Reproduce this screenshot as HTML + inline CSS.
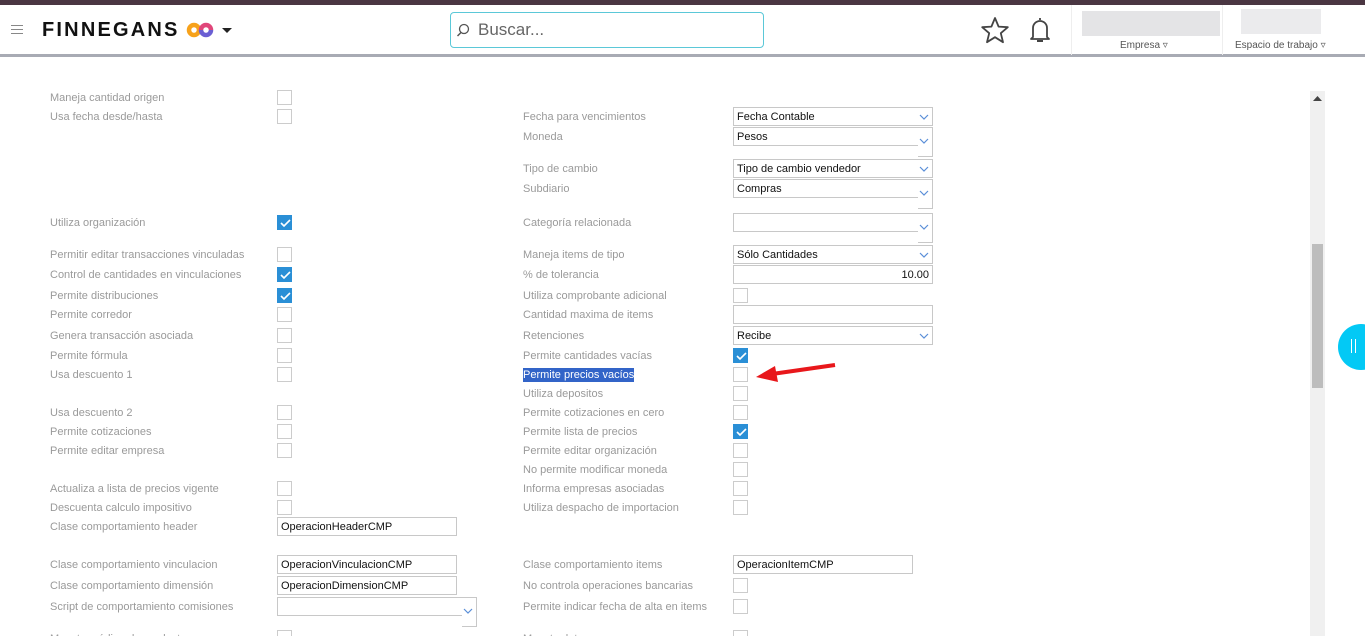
<!DOCTYPE html>
<html><head><meta charset="utf-8"><style>
*{margin:0;padding:0;box-sizing:border-box}
html,body{width:1365px;height:636px;overflow:hidden}
body{background:#fff;font-family:"Liberation Sans",sans-serif;position:relative}
.a{position:absolute}
.l{position:absolute;font-size:11px;color:#9a9a9a;line-height:14px;white-space:nowrap;margin-top:1px}
.cb{position:absolute;width:15px;height:15px;border:1px solid #ccc;background:#fff}
.cb.on{background:#2a8fd6;border-color:#2a8fd6}
.cb.on svg{position:absolute;left:1px;top:1px}
.in{position:absolute;width:200px;height:19px;border:1px solid #c8c8c8;font-size:11px;color:#111;line-height:19px;padding-left:3px;background:#fff}
.chev{position:absolute;right:3px;top:6px;width:10px;height:6px}
.ln{position:absolute;background:#c8c8c8}
</style></head><body>
<div class="a" style="left:0;top:0;width:1365px;height:5px;background:#4a3642"></div>
<div class="a" style="left:0;top:54px;width:1365px;height:3px;background:#a8abb4"></div>
<div class="a" style="left:11px;top:25px;width:12px;height:1px;background:#888;box-shadow:0 4px 0 #888,0 8px 0 #888"></div>
<div class="a" style="left:42px;top:18px;font-size:20px;font-weight:bold;letter-spacing:2.2px;color:#111;line-height:24px">FINNEGANS</div>
<svg class="a" style="left:186px;top:22px" width="30" height="16"><circle cx="8" cy="8" r="5" fill="none" stroke="#f7a21b" stroke-width="4.5"/><path d="M15 8a5 5 0 0 1 10 0" fill="none" stroke="#e0467a" stroke-width="4.5"/><path d="M15 8a5 5 0 0 0 10 0" fill="none" stroke="#6b5fd3" stroke-width="4.5"/></svg>
<svg class="a" style="left:222px;top:28px" width="10" height="6"><path d="M0 0h10L5 5z" fill="#222"/></svg>
<div class="a" style="left:450px;top:12px;width:314px;height:36px;border:1px solid #5bc8d8;border-radius:4px"></div>
<svg class="a" style="left:456px;top:23px" width="14" height="14"><circle cx="8" cy="6" r="4.5" fill="none" stroke="#555" stroke-width="1.3"/><path d="M5 9.5L1.5 13" stroke="#555" stroke-width="1.5"/></svg>
<div class="a" style="left:478px;top:20px;font-size:17px;color:#666">Buscar...</div>
<svg class="a" style="left:980px;top:16px" width="30" height="29"><path d="M15 2l3.6 8.6 9.2.6-7 6 2.2 9-8-5-8 5 2.2-9-7-6 9.2-.6z" fill="none" stroke="#444" stroke-width="1.8" stroke-linejoin="round"/></svg>
<svg class="a" style="left:1027px;top:15px" width="26" height="31"><path d="M13 3v2M6 22V13a7 7 0 0 1 14 0v9l2 2H4z" fill="none" stroke="#444" stroke-width="1.8" stroke-linejoin="round"/><path d="M10 26h6" stroke="#444" stroke-width="2"/></svg>
<div class="a" style="left:1071px;top:5px;width:1px;height:50px;background:#eee"></div>
<div class="a" style="left:1222px;top:5px;width:1px;height:50px;background:#eee"></div>
<div class="a" style="left:1082px;top:11px;width:138px;height:25px;background:#e4e4e6"></div>
<div class="a" style="left:1241px;top:9px;width:80px;height:25px;background:#ebebed"></div>
<div class="a" style="left:1120px;top:40px;font-size:10px;color:#555">Empresa ▿</div>
<div class="a" style="left:1235px;top:40px;font-size:10px;color:#555">Espacio de trabajo ▿</div>

<div class="l" style="left:50px;top:90px">Maneja cantidad origen</div>
<div class="l" style="left:50px;top:109px">Usa fecha desde/hasta</div>
<div class="l" style="left:50px;top:215px">Utiliza organización</div>
<div class="l" style="left:50px;top:247px">Permitir editar transacciones vinculadas</div>
<div class="l" style="left:50px;top:267px">Control de cantidades en vinculaciones</div>
<div class="l" style="left:50px;top:288px">Permite distribuciones</div>
<div class="l" style="left:50px;top:307px">Permite corredor</div>
<div class="l" style="left:50px;top:328px">Genera transacción asociada</div>
<div class="l" style="left:50px;top:348px">Permite fórmula</div>
<div class="l" style="left:50px;top:367px">Usa descuento 1</div>
<div class="l" style="left:50px;top:405px">Usa descuento 2</div>
<div class="l" style="left:50px;top:424px">Permite cotizaciones</div>
<div class="l" style="left:50px;top:443px">Permite editar empresa</div>
<div class="l" style="left:50px;top:481px">Actualiza a lista de precios vigente</div>
<div class="l" style="left:50px;top:500px">Descuenta calculo impositivo</div>
<div class="l" style="left:50px;top:519px">Clase comportamiento header</div>
<div class="l" style="left:50px;top:557px">Clase comportamiento vinculacion</div>
<div class="l" style="left:50px;top:578px">Clase comportamiento dimensión</div>
<div class="l" style="left:50px;top:599px">Script de comportamiento comisiones</div>
<div class="l" style="left:50px;top:631px">Muestra código de producto</div>

<div class="cb" style="left:277px;top:90px"></div>
<div class="cb" style="left:277px;top:109px"></div>
<div class="cb on" style="left:277px;top:215px"><svg width="12" height="12"><path d="M2 6l3 3 6-6" fill="none" stroke="#fff" stroke-width="1.6"/></svg></div>
<div class="cb" style="left:277px;top:247px"></div>
<div class="cb on" style="left:277px;top:267px"><svg width="12" height="12"><path d="M2 6l3 3 6-6" fill="none" stroke="#fff" stroke-width="1.6"/></svg></div>
<div class="cb on" style="left:277px;top:288px"><svg width="12" height="12"><path d="M2 6l3 3 6-6" fill="none" stroke="#fff" stroke-width="1.6"/></svg></div>
<div class="cb" style="left:277px;top:307px"></div>
<div class="cb" style="left:277px;top:328px"></div>
<div class="cb" style="left:277px;top:348px"></div>
<div class="cb" style="left:277px;top:367px"></div>
<div class="cb" style="left:277px;top:405px"></div>
<div class="cb" style="left:277px;top:424px"></div>
<div class="cb" style="left:277px;top:443px"></div>
<div class="cb" style="left:277px;top:481px"></div>
<div class="cb" style="left:277px;top:500px"></div>
<div class="cb" style="left:277px;top:630px"></div>
<div class="in" style="left:277px;top:517px;width:180px">OperacionHeaderCMP</div>
<div class="in" style="left:277px;top:555px;width:180px">OperacionVinculacionCMP</div>
<div class="in" style="left:277px;top:576px;width:180px">OperacionDimensionCMP</div>
<div class="in" style="left:277px;top:597px;border-bottom:none;height:19px"></div>
<div class="ln" style="left:277px;top:615px;width:185px;height:1px"></div>
<div class="ln" style="left:476px;top:616px;width:1px;height:11px"></div>
<div class="ln" style="left:462px;top:626px;width:15px;height:1px"></div>
<svg class="a" style="left:463px;top:608px" width="10" height="6"><path d="M1 1l4 4 4-4" fill="none" stroke="#5a8ed8" stroke-width="1.2"/></svg>

<div class="l" style="left:523px;top:109px">Fecha para vencimientos</div>
<div class="l" style="left:523px;top:129px">Moneda</div>
<div class="l" style="left:523px;top:161px">Tipo de cambio</div>
<div class="l" style="left:523px;top:181px">Subdiario</div>
<div class="l" style="left:523px;top:215px">Categoría relacionada</div>
<div class="l" style="left:523px;top:247px">Maneja items de tipo</div>
<div class="l" style="left:523px;top:267px">% de tolerancia</div>
<div class="l" style="left:523px;top:288px">Utiliza comprobante adicional</div>
<div class="l" style="left:523px;top:307px">Cantidad maxima de items</div>
<div class="l" style="left:523px;top:328px">Retenciones</div>
<div class="l" style="left:523px;top:348px">Permite cantidades vacías</div>
<div class="l" style="left:523px;top:367px;background:#3264c8;color:#fff">Permite precios vacíos</div>
<div class="l" style="left:523px;top:386px">Utiliza depositos</div>
<div class="l" style="left:523px;top:405px">Permite cotizaciones en cero</div>
<div class="l" style="left:523px;top:424px">Permite lista de precios</div>
<div class="l" style="left:523px;top:443px">Permite editar organización</div>
<div class="l" style="left:523px;top:462px">No permite modificar moneda</div>
<div class="l" style="left:523px;top:481px">Informa empresas asociadas</div>
<div class="l" style="left:523px;top:500px">Utiliza despacho de importacion</div>
<div class="l" style="left:523px;top:557px">Clase comportamiento items</div>
<div class="l" style="left:523px;top:578px">No controla operaciones bancarias</div>
<div class="l" style="left:523px;top:599px">Permite indicar fecha de alta en items</div>
<div class="l" style="left:523px;top:631px">Muestra lote</div>

<div class="in" style="left:733px;top:107px">Fecha Contable<svg class="chev" viewBox="0 0 10 6"><path d="M1 1l4 4 4-4" fill="none" stroke="#5a8ed8" stroke-width="1.2"/></svg></div>
<div class="in" style="left:733px;top:159px">Tipo de cambio vendedor<svg class="chev" viewBox="0 0 10 6"><path d="M1 1l4 4 4-4" fill="none" stroke="#5a8ed8" stroke-width="1.2"/></svg></div>
<div class="in" style="left:733px;top:245px">Sólo Cantidades<svg class="chev" viewBox="0 0 10 6"><path d="M1 1l4 4 4-4" fill="none" stroke="#5a8ed8" stroke-width="1.2"/></svg></div>
<div class="in" style="left:733px;top:265px;text-align:right;padding-right:3px">10.00</div>
<div class="in" style="left:733px;top:305px"></div>
<div class="in" style="left:733px;top:326px">Recibe<svg class="chev" viewBox="0 0 10 6"><path d="M1 1l4 4 4-4" fill="none" stroke="#5a8ed8" stroke-width="1.2"/></svg></div>
<div class="in" style="left:733px;top:555px;width:180px">OperacionItemCMP</div>

<div class="in" style="left:733px;top:127px;border-bottom:none">Pesos</div>
<div class="ln" style="left:733px;top:145px;width:185px;height:1px"></div>
<div class="ln" style="left:932px;top:146px;width:1px;height:11px"></div>
<div class="ln" style="left:918px;top:156px;width:15px;height:1px"></div>
<svg class="a" style="left:919px;top:138px" width="10" height="6"><path d="M1 1l4 4 4-4" fill="none" stroke="#5a8ed8" stroke-width="1.2"/></svg>
<div class="in" style="left:733px;top:179px;border-bottom:none">Compras</div>
<div class="ln" style="left:733px;top:197px;width:185px;height:1px"></div>
<div class="ln" style="left:932px;top:198px;width:1px;height:11px"></div>
<div class="ln" style="left:918px;top:208px;width:15px;height:1px"></div>
<svg class="a" style="left:919px;top:190px" width="10" height="6"><path d="M1 1l4 4 4-4" fill="none" stroke="#5a8ed8" stroke-width="1.2"/></svg>
<div class="in" style="left:733px;top:213px;border-bottom:none"></div>
<div class="ln" style="left:733px;top:231px;width:185px;height:1px"></div>
<div class="ln" style="left:932px;top:232px;width:1px;height:11px"></div>
<div class="ln" style="left:918px;top:242px;width:15px;height:1px"></div>
<svg class="a" style="left:919px;top:224px" width="10" height="6"><path d="M1 1l4 4 4-4" fill="none" stroke="#5a8ed8" stroke-width="1.2"/></svg>

<div class="cb" style="left:733px;top:288px"></div>
<div class="cb on" style="left:733px;top:348px"><svg width="12" height="12"><path d="M2 6l3 3 6-6" fill="none" stroke="#fff" stroke-width="1.6"/></svg></div>
<div class="cb" style="left:733px;top:367px"></div>
<div class="cb" style="left:733px;top:386px"></div>
<div class="cb" style="left:733px;top:405px"></div>
<div class="cb on" style="left:733px;top:424px"><svg width="12" height="12"><path d="M2 6l3 3 6-6" fill="none" stroke="#fff" stroke-width="1.6"/></svg></div>
<div class="cb" style="left:733px;top:443px"></div>
<div class="cb" style="left:733px;top:462px"></div>
<div class="cb" style="left:733px;top:481px"></div>
<div class="cb" style="left:733px;top:500px"></div>
<div class="cb" style="left:733px;top:578px"></div>
<div class="cb" style="left:733px;top:599px"></div>
<div class="cb" style="left:733px;top:630px"></div>

<svg class="a" style="left:750px;top:360px" width="90" height="25"><path d="M85 5L22 14" stroke="#e8171b" stroke-width="4"/><path d="M6 17L25 6 28 22z" fill="#e8171b"/></svg>

<div class="a" style="left:1310px;top:91px;width:15px;height:545px;background:#f0f0f0"></div>
<svg class="a" style="left:1313px;top:96px" width="9" height="5"><path d="M0 5L4.5 0 9 5z" fill="#444"/></svg>
<div class="a" style="left:1312px;top:244px;width:11px;height:144px;background:#bdbdbd"></div>
<div class="a" style="left:1338px;top:324px;width:46px;height:46px;border-radius:50%;background:#03c9f5"></div>
<div class="a" style="left:1351px;top:339px;width:1px;height:14px;background:#fff;box-shadow:4px 0 0 #fff"></div>
</body></html>
